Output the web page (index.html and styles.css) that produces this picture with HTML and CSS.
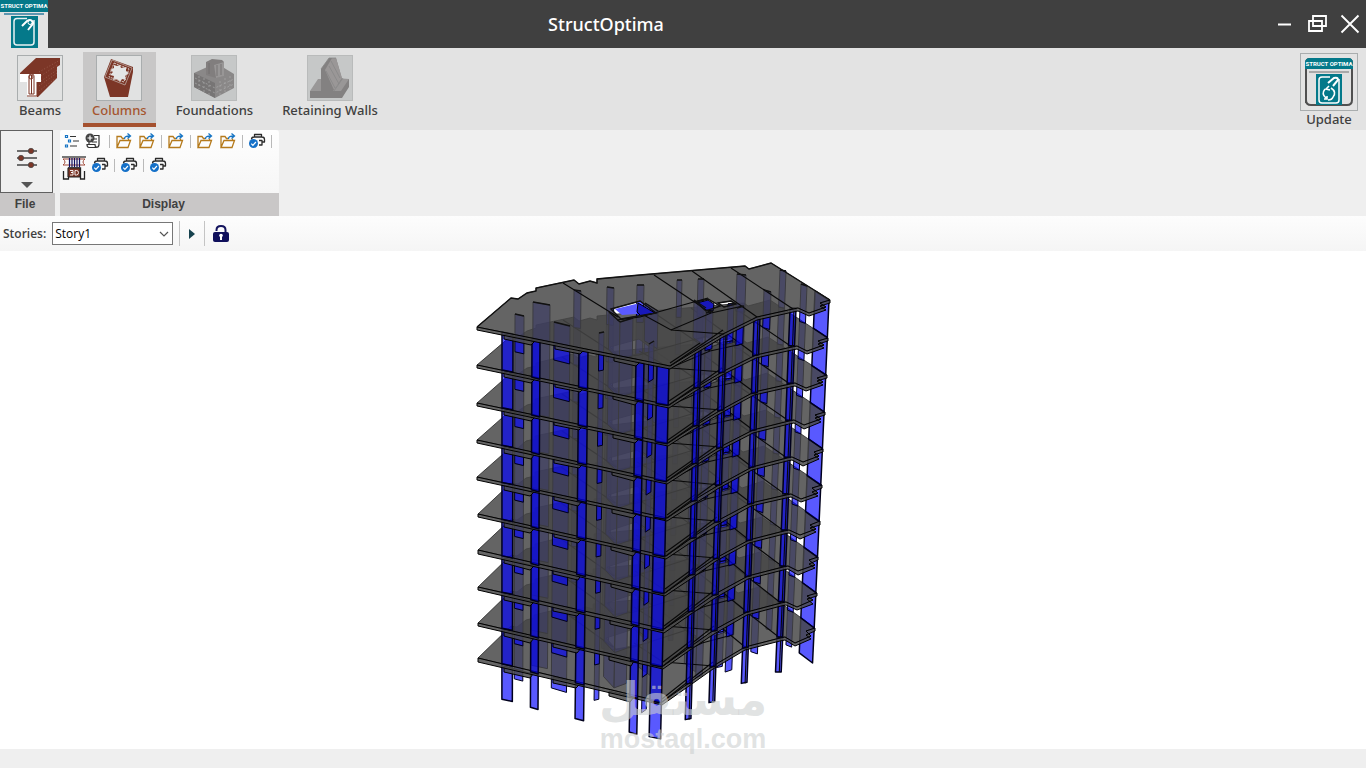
FILE: index.html
```html
<!DOCTYPE html>
<html lang="en">
<head>
<meta charset="utf-8">
<title>StructOptima</title>
<link rel="stylesheet" href="styles.css">
</head>
<body>
<svg class="defs" aria-hidden="true">
  <symbol id="folder" viewBox="0 0 18 16">
    <path d="M2 14.500V3.500h4l1.500 2h2M13.500 5.500v2M2 14.500l3-7h10.500l-2.500 7z" fill="none" stroke="#b57a1c" stroke-width="1.300"/>
    <path d="M9.500 6c0-2 1-3 5-3M12.500 .500L15.500 3l-3 2.500" fill="none" stroke="#1674c4" stroke-width="1.300"/>
  </symbol>
  <symbol id="print" viewBox="0 0 18 18">
    <path d="M6.500 5V2.500h7V5M3.500 7.500q0-2.500 2.500-2.500h8q2.500 0 2.500 2.500V10h-3M11 8.500h3v4.500h-3" fill="none" stroke="#2b2b2b" stroke-width="1.300" stroke-linejoin="round"/>
    <circle cx="5.500" cy="11.500" r="4.500" fill="#1470c8"/>
    <path d="M3.300 11.600l1.600 1.700 3-3.300" fill="none" stroke="#fff" stroke-width="1.200"/>
  </symbol>
</svg>

<header class="titlebar">
  <svg class="logo" viewBox="0 0 48 48" role="img" aria-label="Struct Optima">
    <path fill="#e3e3e3" d="M0 0h48v48H0z"/>
    <path fill="#04798a" d="M0 0h48v12H0zM11 16h27v32H11z"/>
    <path fill="#5c96b0" d="M4 13h40v2H4z"/>
    <text x="24" y="8" class="logo-text">STRUCT OPTIMA</text>
    <path d="M27 18.500H17q-3 0-3 3V42q0 3 3 3h14q3 0 3-3V20" fill="none" stroke="#e8f2f3" stroke-width="1.500"/>
    <path d="M22 26l5-5q3-2 5 0t0 4l-4 5" fill="none" stroke="#fff" stroke-width="2"/><circle cx="30" cy="22.500" r="2" fill="#04798a" stroke="#fff"/>
  </svg>
  <h1 class="title">StructOptima</h1>
  <div class="window-controls">
    <button class="window-button" aria-label="Minimize"><svg viewBox="0 0 20 20" width="20" height="20"><path d="M4 10.500h13" stroke="#fff" stroke-width="2"/></svg></button>
    <button class="window-button" aria-label="Restore"><svg viewBox="0 0 20 20" width="20" height="20"><path d="M6 2h13v10H6zM2 7h13v10H2z" fill="none" stroke="#fff" stroke-width="1.800"/></svg></button>
    <button class="window-button" aria-label="Close"><svg viewBox="0 0 20 20" width="20" height="20"><path d="M1.500 1.500l17 17M18.500 1.500l-17 17" stroke="#fff" stroke-width="1.900"/></svg></button>
  </div>
</header>

<nav class="modules" aria-label="Modules">
  <button class="module">
    <svg class="module-icon" viewBox="0 0 44 44">
      <path fill="#7c3627" d="M2 17L18 2h24v7l-3 2v11L20 41H9V24H2z"/>
      <path fill="#fff" d="M2 18h21v8h-4v15H9V26H2z"/>
      <path d="M21 16L42 4M23 20L39 9M23 25l16-11M21 30l18-13M21 35l17-13" stroke="#a46a59" stroke-width=".700" stroke-dasharray="1 2"/>
      <path d="M11 38V20q0-2 2.500-2t2.500 2v18zM13.500 19v19M19 26v14H9" fill="none" stroke="#7c3627"/>
      <circle cx="13" cy="21" r="2" fill="none" stroke="#7c3627"/>
    </svg>
    <span>Beams</span>
  </button>
  <button class="module module-active">
    <svg class="module-icon" viewBox="0 0 44 44">
      <path fill="#7c3627" d="M14 3l22 8v5l-5 25H13L7 21z"/>
      <path d="M15 4l20 8-7 17L8 21z" fill="#7c3627" stroke="#b49b93" stroke-width=".900"/>
      <path d="M17 9l3 1 3-1 1 3 5-1v4l3 2-4 3 1 4-4-1-2 3-3-3-4 1 1-4-4-1 3-3-3-2 4-2z" fill="#e4e5e5"/>
      <path d="M17 7l15 6-5 13-15-5z" fill="none" stroke="#d9cdc9" stroke-dasharray="2 1"/>
    </svg>
    <span>Columns</span>
  </button>
  <button class="module">
    <svg class="module-icon module-icon-muted" viewBox="0 0 44 44">
      <path fill="#8a8888" d="M2 17l22-10 18 11v14L23 42 2 31z"/>
      <path fill="#777575" d="M2 17l21 10v15L2 31z"/>
      <path fill="#817e7e" d="M14 6l6-3 10 1 2 2v14l-8 2-10-3z"/>
      <path fill="#989696" d="M22 9l10-3v14l-8 2z"/>
      <path d="M3 22l20 10 19-9M3 27l20 10 19-9M7 20v13M12 22v14M17 25v14M28 25v14M33 22v14M38 20v13" stroke="#aaa" stroke-width=".700" fill="none" stroke-dasharray="2 2"/>
      <path d="M17 7v11M25 9v11M29 8v11" stroke="#6f6d6d" stroke-width=".800"/>
    </svg>
    <span>Foundations</span>
  </button>
  <button class="module">
    <svg class="module-icon module-icon-muted" viewBox="0 0 44 44">
      <path fill="#999797" d="M2 35l8-12h8l10-1 13 1v7L31 42H2z"/>
      <path fill="#838181" d="M2 35h11V13L21 2h7l6 21-9 12h8l8-12v8L34 42H2z"/>
      <path fill="#9a9797" d="M17 14l7-12h4l6 20-8 12z"/>
      <path d="M13 13L21 2h7M18 15l9 17M21 10l10 18M23 5l9 17M26 35l9-13" stroke="#888" fill="none" stroke-width=".800"/>
    </svg>
    <span>Retaining Walls</span>
  </button>
  <button class="module module-update">
    <svg class="update-icon" viewBox="0 0 56 56">
      <path d="M5 49V9q0-4 4-4h38q4 0 4 4v37q0 5-5 5H10q-5 0-5-5z" fill="#e1e1e1" stroke="#505050" stroke-width="2"/>
      <path fill="#04798a" d="M4 15V9q0-5 5-5h38q5 0 5 5v6zM15 20h26v31H15z"/>
      <path fill="#a9a9a9" d="M8 17h40v2H8z"/>
      <text x="28" y="12" class="logo-text">STRUCT OPTIMA</text>
      <path d="M29 23h-8q-3 0-3 3v20q0 3 3 3h14q3 0 3-3V25" fill="none" stroke="#fff" stroke-width="1.500"/>
      <path d="M27 29l6-5q4-1 4 2l-5 6" fill="none" stroke="#fff" stroke-width="2"/>
      <path d="M24 35q-4 5 1 9M23 45h3v-3M30 34q6 4 2 9M27 46q4 0 5-3M28 32l-3 3 4 1" fill="none" stroke="#fff" stroke-width="1.600"/>
    </svg>
    <span>Update</span>
  </button>
</nav>

<section class="ribbon" aria-label="Ribbon">
  <div class="group group-file">
    <button class="file-button" aria-label="File options">
      <svg viewBox="0 0 24 22" width="24" height="22"><path d="M2 4h20M2 11h20M2 18h20" stroke="#444" stroke-width="1.300"/><g fill="#7c3627" stroke="#444" stroke-width=".700"><circle cx="16" cy="4" r="2.700"/><circle cx="6" cy="11" r="2.700"/><circle cx="16" cy="18" r="2.700"/></g></svg>
      <svg viewBox="0 0 12 6" width="12" height="6"><path d="M0 0h12L6 6z" fill="#555"/></svg>
    </button>
    <h2 class="caption">File</h2>
  </div>
  <div class="group group-display">
    <div class="tools">
      <div class="tool-row">
        <button class="tool" aria-label="List"><svg viewBox="0 0 16 16" width="16" height="16"><path d="M6 3.500h6M9 8h6M6 13h7" stroke="#333" stroke-width="1.200"/><path d="M1.500 2.500h2v2h-2zM4.500 7h2v2h-2zM1.500 12h2v2h-2z" fill="#fff" stroke="#1674c4" stroke-width="1.200"/></svg></button>
        <button class="tool tool-script" aria-label="Add report"><svg viewBox="0 0 16 16" width="16" height="16"><path d="M9 2.500h5v9q0 3-3 3H4q-2 0-2-3h8q0 3 2 3M4 11V8M9 6h3M7 9h5" fill="none" stroke="#333" stroke-width="1.200"/><circle cx="5" cy="5" r="4.500" fill="#444"/><path d="M5 2.500v5M2.500 5h5" stroke="#fff" stroke-width="1.200"/></svg></button>
        <i class="rule"></i>
        <button class="tool" aria-label="Open model"><svg class="folder"><use href="#folder"/></svg></button>
        <button class="tool" aria-label="Open results"><svg class="folder"><use href="#folder"/></svg></button>
        <i class="rule"></i>
        <button class="tool" aria-label="Open sections"><svg class="folder"><use href="#folder"/></svg></button>
        <i class="rule"></i>
        <button class="tool" aria-label="Open loads"><svg class="folder"><use href="#folder"/></svg></button>
        <button class="tool" aria-label="Open design"><svg class="folder"><use href="#folder"/></svg></button>
        <i class="rule"></i>
        <button class="tool" aria-label="Print"><svg class="print"><use href="#print"/></svg></button>
        <i class="rule"></i>
      </div>
      <div class="tool-row tool-row-second">
        <button class="tool tool-3d" aria-label="3D view"><svg viewBox="0 0 24 24" width="24" height="24"><path fill="#777" d="M0 0h24v2H0z"/><path d="M1 3q4 3 0 6M23 3q-4 3 0 6M1 3h22M1 9h22" fill="none" stroke="#a14b3b"/><path d="M7.500 2v9M10 2v9M12.500 2v9M15 2v9M17.500 2v9" stroke="#101060" stroke-width="1.200"/><path d="M1.500 15v8h5V12h12v11h4v-8" fill="none" stroke="#222" stroke-width="1.300"/><path fill="#7c3627" stroke="#222" d="M6 12h12v9H6z"/><path d="M8 14.500h3v2H9h2V19H8M13 14.500h1.500q2 0 2 2.200T14.500 19H13z" fill="none" stroke="#fff" stroke-width=".900"/></svg></button>
        <button class="tool" aria-label="Print plan"><svg class="print"><use href="#print"/></svg></button>
        <i class="rule"></i>
        <button class="tool" aria-label="Print schedule"><svg class="print"><use href="#print"/></svg></button>
        <i class="rule"></i>
        <button class="tool" aria-label="Print report"><svg class="print"><use href="#print"/></svg></button>
      </div>
    </div>
    <h2 class="caption">Display</h2>
  </div>
</section>

<div class="storybar">
  <label class="story-label" for="story">Stories:</label>
  <div class="select-wrap">
    <select id="story" class="story-select"><option>Story1</option><option>Story2</option><option>Story3</option></select>
    <svg class="chevron" viewBox="0 0 10 6" width="10" height="6"><path d="M1 1l4 4 4-4" fill="none" stroke="#555" stroke-width="1.200"/></svg>
  </div>
  <i class="bar-rule"></i>
  <button class="tool" aria-label="Run"><svg viewBox="0 0 8 12" width="8" height="12"><path d="M1 1l6 5-6 5z" fill="#17424e"/></svg></button>
  <i class="bar-rule"></i>
  <button class="tool" aria-label="Unlock"><svg viewBox="0 0 16 18" width="16" height="18"><path d="M3.500 6V5q0-4 4.500-4t4.500 4v3" fill="none" stroke="#14145e" stroke-width="2"/><rect y="7" width="16" height="10" rx="2" fill="#10105c"/><path d="M8 9v6" stroke="#fff" stroke-width="2"/><circle cx="8" cy="10.500" r="1.800" fill="#fff"/></svg></button>
</div>

<main class="viewport">
  <svg class="model" viewBox="0 251 1366 498" role="img" aria-label="3D model of the building">
    <g id="building"></g>
    <g class="watermark">
      <text x="683" y="715" class="watermark-name">مستقل</text>
      <text x="683" y="748" class="watermark-site">mostaql.com</text>
    </g>
  </svg>
</main>
<footer class="statusbar"></footer>
<script src="building.js"></script>
</body>
</html>
```

FILE: styles.css
```css
* { box-sizing: border-box; }
body {
  margin: 0;
  min-height: 100vh;
  display: flex;
  flex-direction: column;
  background: #efefef;
  color: #404040;
  font-family: "Noto Sans", "Open Sans", sans-serif;
}
button { border: 0; padding: 0; background: none; font: inherit; color: inherit; }
h1, h2 { margin: 0; }
svg { display: block; flex: none; }
.defs { position: absolute; width: 0; height: 0; }

.titlebar { display: flex; align-items: center; background: #404040; color: #fff; }
.logo { width: 48px; height: 48px; }
.logo-text { font: bold 6px Roboto, "Liberation Sans", sans-serif; fill: #fff; text-anchor: middle; }
.title { flex: 1; text-align: center; font-size: 18px; line-height: 24px; font-weight: 500; }
.window-controls { display: flex; justify-content: flex-end; gap: 13px; width: 202px; padding-right: 6px; }

.modules { display: flex; align-items: flex-start; gap: 11px; min-height: 82px; padding: 4px 8px 0; background: #e3e3e3; }
.module { display: flex; flex-direction: column; align-items: center; padding: 3px 9px 4px; font-family: "Noto Sans", "Open Sans", sans-serif; font-size: 13px; line-height: 18px; font-weight: 500; border-bottom: 4px solid transparent; }
.module-active { background: #c8c7c7; color: #a5552f; border-bottom-color: #a5512f; }
.module-icon { width: 46px; height: 46px; border: 1px solid #a9adae; background: #e1e2e2; }
.module-icon-muted { background: #c6c8c8; border-color: #b9bbbb; }
.module-update { margin-left: auto; padding: 1px 0 0; border: 0; line-height: 16px; }
.update-icon { width: 58px; height: 58px; border: 1px solid #a9adae; }

.ribbon { display: flex; gap: 5px; }
.group { display: flex; flex-direction: column; }
.group-file { width: 55px; }
.group-display { width: 219px; }
.file-button { display: flex; flex-direction: column; align-items: center; justify-content: flex-end; gap: 13px; width: 53px; height: 63px; padding-bottom: 4px; border: 1px solid #606060; }
.caption { height: 23px; background: #c9c7c7; text-align: center; font: bold 12px/23px "Liberation Sans", sans-serif; }
.group-file .caption { padding-right: 5px; }
.group-display .caption { padding-right: 12px; }
.tools { height: 63px; background: linear-gradient(#fefefe, #f6f6f6); border-radius: 3px 3px 0 0; }
.tool-row { display: flex; align-items: center; height: 22px; padding: 0 4px; gap: 5px; }
.tool-row-second { height: 30px; padding: 0 2px; gap: 5px; align-items: flex-start; padding-top: 4px; }
.tool-row-second .rule { margin-top: 3px; }
.tool-script { margin-right: 3px; }
.rule { width: 1px; height: 13px; background: #b9b9b9; }
.folder { width: 18px; height: 16px; }
.print { width: 18px; height: 18px; }

.storybar { display: flex; align-items: center; gap: 6px; min-height: 35px; padding: 0 3px; background: linear-gradient(#fdfdfd, #f5f5f5); font-size: 12px; }
.story-label { font-family: "Open Sans", sans-serif; font-size: 12px; font-weight: 600; }
.select-wrap { position: relative; }
.story-select { appearance: none; width: 121px; height: 23px; padding: 0 2px; border: 1px solid #777; border-radius: 0; background: #fff; color: #000; font: 12px "Open Sans", sans-serif; }
.chevron { position: absolute; right: 4px; top: 9px; pointer-events: none; }
.bar-rule { width: 1px; height: 25px; background: #c4c4c4; }
.storybar .tool { padding: 0 2px; }

.viewport { flex: 1; display: flex; position: relative; z-index: 1; min-height: 0; background: #fff; }
.model { flex: 1; width: 100%; overflow: visible; }
.slab { fill: rgba(70, 70, 70, .84); fill-rule: evenodd; stroke: #222; stroke-width: .8; }
.slab-face { fill: rgba(75, 75, 75, .85); stroke: #000; stroke-width: 1; stroke-linejoin: round; }
.seam { fill: none; stroke: #080808; stroke-width: 1.1; }
.column { fill: rgba(0, 0, 255, .65); stroke: #00001c; stroke-width: 1; stroke-linejoin: round; }
.column-front { stroke-width: 1.5; }
.column-cap { fill: none; stroke: #111; stroke-width: 1.4; }
.shaft-light { fill: #5a5aff; }
.shaft-dark { fill: #1818bc; stroke: #000; }
.watermark { fill: rgba(205, 208, 208, .6); text-anchor: middle; }
.watermark-name { font: bold 46px "DejaVu Sans", sans-serif; }
.watermark-site { font: bold 27px "Liberation Sans", sans-serif; }
.statusbar { height: 19px; background: #efefef; }
```

FILE: building.js
```javascript
// Draws the ten-storey frame from the foundations up, so that each slab
// tints the columns that stand behind it.
const STOREYS = 10;
const root = document.getElementById('building');

// Roof-level point projected down to the given level.
function project([x, y], level) {
  const drop = 328 + (y - 300) * 0.12;
  const t = level / 9;
  return [x - (x - 500) * 0.045 * t, y + drop * t * (1 + 0.004 * (9 - level))];
}

const back = [[477, 327], [511, 298], [518, 299], [527, 293], [536, 291], [536, 288], [574, 280], [579, 284], [590, 281], [597, 283], [597, 279], [640, 275], [745, 266], [749, 269], [771, 263], [830, 300]];
const front = [[830, 300], [820, 303], [826, 307], [809, 313], [798, 308], [793, 309], [757, 317], [723, 334], [698, 349], [670, 366], [477, 327]];
const holes = [
  [[611, 309], [640, 301], [656, 313], [621, 319]],
  [[696, 302], [708, 299], [720, 306], [706, 311]],
  [[718, 303], [731, 301], [736, 304], [724, 307]]
];
const seams = [
  [[563, 283], [618, 317]], [[617, 320], [640, 317], [708, 298]],
  [[654, 275], [711, 313]], [[692, 271], [757, 317]], [[731, 268], [793, 309]],
  [[640, 313], [671, 330], [711, 313], [743, 306]],
  [[671, 330], [724, 334]], [[670, 366], [723, 330]], [[670, 363], [700, 343]]
];
const rear = [
  [780, 270, 786, 271], [737, 274, 746, 275], [698, 279, 704, 279], [677, 280, 682, 280],
  [637, 285, 644, 285], [607, 287, 614, 288], [574, 290, 581, 291],
  [801, 284, 807, 286], [764, 290, 771, 292], [533, 302, 550, 305],
  [609, 312, 620, 322], [620, 322, 633, 318], [645, 303, 658, 311],
  [694, 300, 706, 308], [706, 313, 713, 311], [728, 304, 734, 303], [737, 308, 744, 306],
  [515, 314, 524, 316], [554, 322, 570, 326], [599, 333, 604, 332], [649, 344, 654, 341]
];
const main = [
  [815, 291, 829, 300], [790, 308, 796, 308], [754, 318, 760, 317], [720, 335, 726, 334], [695, 350, 701, 349],
  [502, 332, 513, 334], [532, 339, 540, 341], [579, 349, 588, 351], [636, 361, 644, 363], [657, 365, 669, 367]
];
const drops = [[504, 334, 535, 341], [555, 344, 584, 350], [614, 356, 640, 362]];

function draw(tag, attributes) {
  const node = document.createElementNS('http://www.w3.org/2000/svg', tag);
  for (const name in attributes) node.setAttribute(name, attributes[name]);
  root.appendChild(node);
}
const path = (points, level) => 'M' + points.map(p => project(p, level).map(Math.round).join(' ')).join('L');

function column([x1, y1, x2, y2], level, kind) {
  const top = [[x1, y1], [x2, y2]].map(p => project(p, level));
  const base = [[x2, y2], [x1, y1]].map(p => project(p, level + 1));
  draw('path', { class: 'column ' + kind, d: 'M' + top.concat(base).map(p => p.join(' ')).join('L') + 'Z' });
  if (kind === 'column-front' && x2 - x1 < 7) {
    const a = project([x1 + 4, y1], level), b = project([x1 + 4, y1], level + 1);
    draw('path', { class: 'seam', d: `M${a.join(' ')}L${b.join(' ')}` });
  }
}

for (let level = STOREYS - 1; level >= 0; level--) {
  rear.forEach(c => column(c, level, 'column-rear'));
  main.forEach(c => column(c, level, 'column-front'));
  drops.forEach(([x1, y1, x2, y2]) => {
    draw('path', { class: 'slab-face', d: path([[x1, y1], [x2, y2], [x2 - 4, y2 + 4], [x1, y1 + 5]], level) + 'Z' });
  });
  const outline = path(back.concat(front.slice(1)), level) + 'Z';
  draw('path', { class: 'slab', d: outline + holes.map(h => path(h, level) + 'Z').join('') });
  const lower = front.slice().reverse().map(([x, y]) => [x, y + 3]);
  draw('path', { class: 'slab-face', d: path(front.concat(lower), level) + 'Z' });
  seams.forEach(s => draw('path', { class: 'seam', d: path(s, level) }));
}

// Lift and stair shafts seen through the roof openings.
draw('path', { class: 'shaft-light', d: 'M615 309L640 303L637 314L622 315Z' });
draw('path', { class: 'shaft-dark', d: 'M638 303L655 313L641 316L637 312Z' });
draw('path', { class: 'shaft-dark', d: 'M697 303L708 300L714 304L713 311L706 310Z' });

draw('path', { class: 'column-cap', d: path(back, 0) });
rear.forEach(([x1, y1, x2, y2]) => draw('path', { class: 'column-cap', d: path([[x1, y1], [x2, y2]], 0) }));
holes.forEach(h => draw('path', { class: 'column-cap', d: path(h, 0) + 'Z' }));
```
